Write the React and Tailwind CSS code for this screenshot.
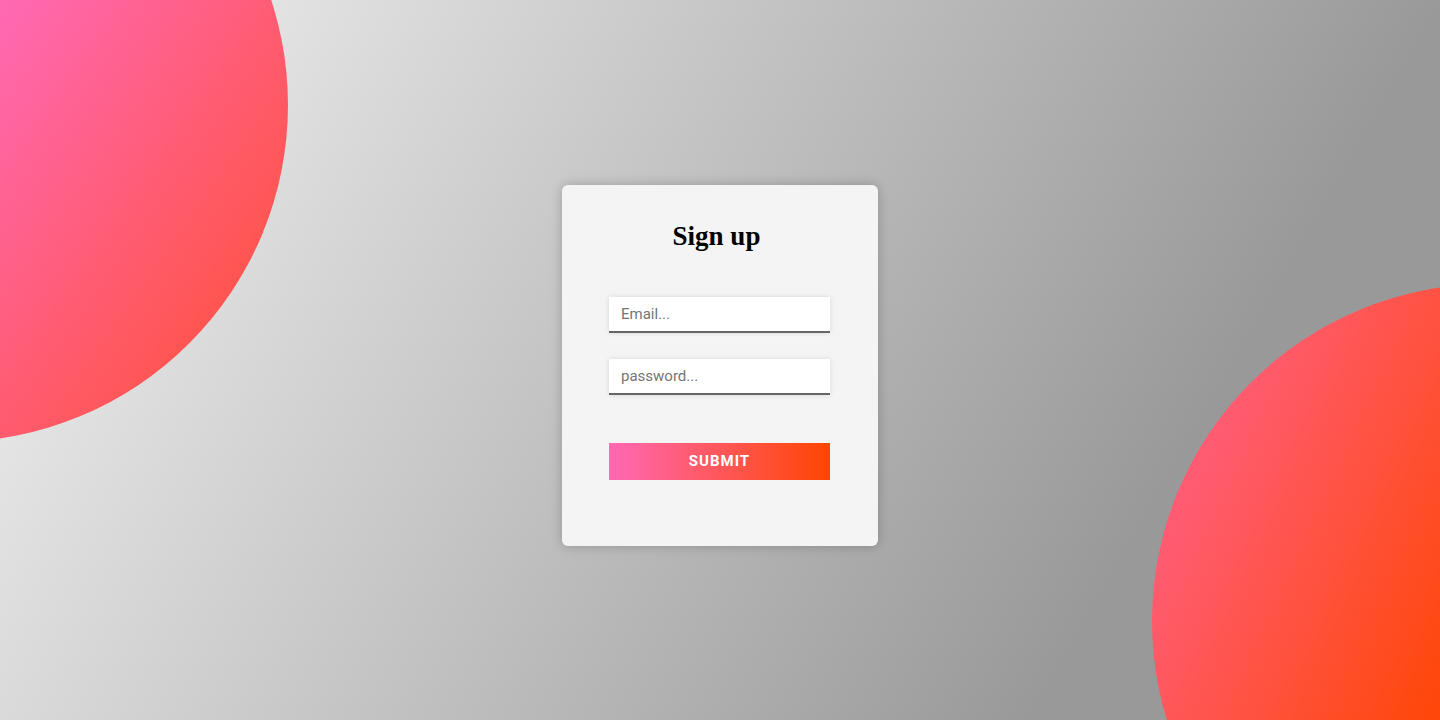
export default function App() {
  return (
    <div className="relative h-[720px] w-full overflow-hidden bg-[linear-gradient(120deg,#f4f4f4_0%,#999999_78%)] font-['Roboto',sans-serif]">
      <div className="absolute left-[-386px] top-[-232px] h-[674px] w-[674px] rounded-full bg-[linear-gradient(125deg,#ff69b4_48%,#ff4500_117%)]" />
      <div className="absolute right-[-386px] top-[284px] h-[674px] w-[674px] rounded-full bg-[linear-gradient(115deg,#ff69b4_-9%,#ff4500_52%)]" />
      <div className="relative flex h-[720px] items-center justify-center pt-[11px]">
        <div className="flex w-[316px] flex-col items-start rounded-md bg-[#f4f4f4] px-[47px] pt-[36px] pb-[66px] shadow-[0_0_12px_rgba(0,0,0,0.22)]">
          <h1 className="w-full pr-[7px] text-center font-['Liberation_Serif',serif] text-[27px] font-bold leading-[31px] text-black">
            Sign up
          </h1>
          <input
            type="email"
            placeholder="Email..."
            className="mt-[45px] h-[36px] w-[221px] border-b-2 border-[#666666] bg-white px-[12px] text-[15px] text-[#333] shadow-[0_0_5px_rgba(0,0,0,0.12)] outline-none placeholder:text-[#757575]"
          />
          <input
            type="password"
            placeholder="password..."
            className="mt-[26px] h-[36px] w-[221px] border-b-2 border-[#666666] bg-white px-[12px] text-[15px] text-[#333] shadow-[0_0_5px_rgba(0,0,0,0.12)] outline-none placeholder:text-[#757575]"
          />
          <button
            type="button"
            className="mt-[48px] h-[37px] w-[221px] bg-[linear-gradient(to_right,#ff69b4,#ff4500)] text-[15px] font-bold tracking-[1px] text-white"
          >
            SUBMIT
          </button>
        </div>
      </div>
    </div>
  );
}
